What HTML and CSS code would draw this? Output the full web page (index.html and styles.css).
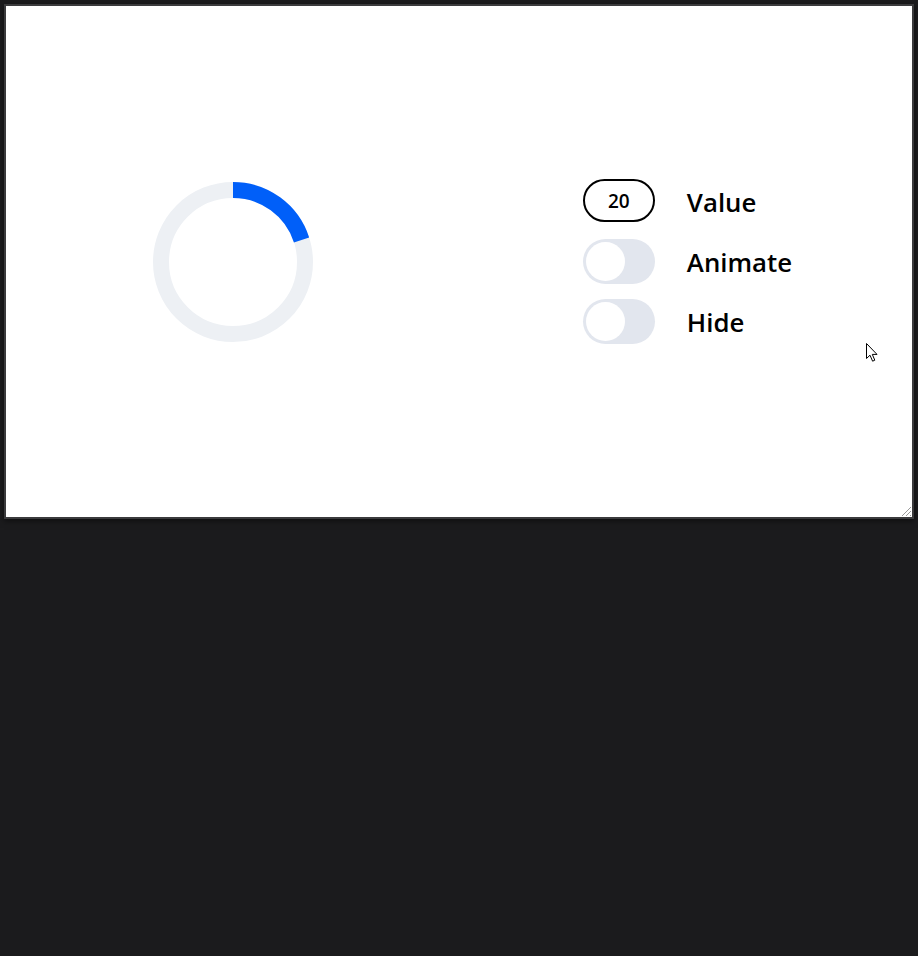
FILE: index.html
```html
<!DOCTYPE html>
<html>
<head>
<meta charset="utf-8">
<link rel="stylesheet" href="styles.css">
</head>
<body>
<div class="frame">
  <div class="pane ring-pane">
    <svg class="ring" width="160" height="160" viewBox="0 0 160 160">
      <circle cx="80" cy="80" r="72" fill="none" stroke="#edf0f4" stroke-width="16"/>
      <circle cx="80" cy="80" r="72" fill="none" stroke="#005ff9" stroke-width="16" stroke-dasharray="90.48 452.39" transform="rotate(-90 80 80)"/>
    </svg>
  </div>
  <div class="pane controls-pane">
    <div class="controls">
      <div class="row">
        <div class="num">20</div>
        <span class="label">Value</span>
      </div>
      <div class="row">
        <div class="toggle"><span class="knob"></span></div>
        <span class="label">Animate</span>
      </div>
      <div class="row">
        <div class="toggle"><span class="knob"></span></div>
        <span class="label">Hide</span>
      </div>
    </div>
  </div>
  <svg class="cursor" width="14" height="22" viewBox="0 0 14 22">
    <path d="M1.5 1.5 L1.5 16.5 L5 13.2 L7.6 19.2 L9.8 18.2 L7.3 12.4 L12 12.4 Z" fill="#fff" stroke="#000" stroke-width="1" stroke-linejoin="miter"/>
  </svg>
  <svg class="grip" width="12" height="12" viewBox="0 0 12 12">
    <path d="M11 2 L2 11 M11 6 L6 11 M11 10 L10 11" stroke="#9a9a9a" stroke-width="1"/>
  </svg>
</div>
</body>
</html>
```
FILE: styles.css
```css
html, body {
  margin: 0;
  padding: 0;
  background: #1b1b1d;
  height: 100%;
}
body {
  padding: 4px;
  box-sizing: border-box;
  font-family: "Open Sans", "Noto Sans", sans-serif;
}
.frame {
  position: relative;
  width: 906px;
  height: 511px;
  background: #fff;
  border: 2px solid #3b3b3d;
  display: flex;
  box-shadow: 0 2px 6px rgba(0,0,0,0.5);
}
.pane {
  flex: 1;
  display: flex;
  align-items: center;
  justify-content: center;
}
.ring { display: block; }
.controls {
  display: flex;
  flex-direction: column;
  gap: 16px;
  margin-left: 4px;
}
.row {
  display: flex;
  align-items: center;
  gap: 32px;
  height: 44px;
}
.num {
  box-sizing: border-box;
  width: 72px;
  height: 43px;
  margin-top: -2px;
  border: 2px solid #000;
  border-radius: 22px;
  display: flex;
  align-items: center;
  justify-content: center;
  font-weight: 600;
  font-size: 19px;
  color: #000;
}
.toggle {
  box-sizing: border-box;
  width: 72px;
  height: 45px;
  border-radius: 23px;
  background: #e2e6ee;
  padding: 3px;
  display: flex;
  align-items: center;
}
.knob {
  width: 39px;
  height: 39px;
  border-radius: 50%;
  background: #fff;
}
.label {
  font-size: 25.8px;
  font-weight: 600;
  color: #000;
}
.cursor {
  position: absolute;
  left: 859px;
  top: 336px;
}
.grip {
  position: absolute;
  right: 0;
  bottom: 0;
}
```
